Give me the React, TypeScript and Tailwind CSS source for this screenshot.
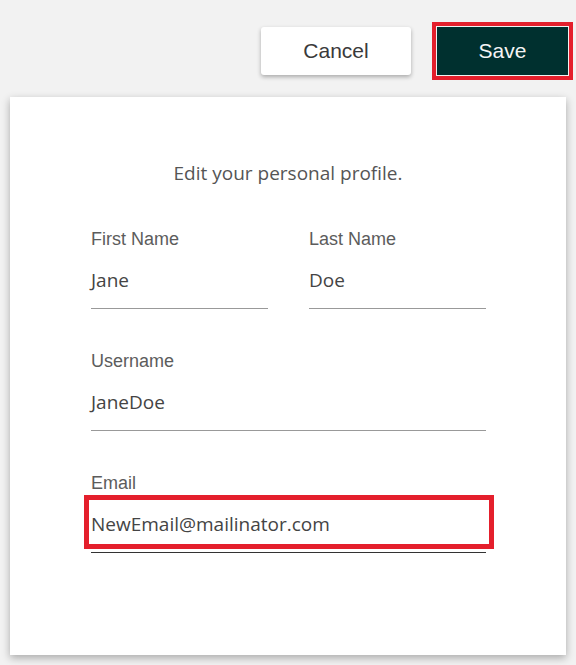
export default function App() {
  return (
    <div className="min-h-[665px] bg-[#f2f2f2] pt-[27px] font-['Liberation_Sans',Arial,sans-serif]">
      {/* Action buttons */}
      <div className="flex justify-end pr-[8px]">
        <button className="mr-[26px] h-[48px] w-[150px] rounded-[3px] bg-white text-[21px] text-[#3a3a3a] shadow-[0_2px_4px_rgba(0,0,0,0.3)]">
          Cancel
        </button>
        <button className="h-[48px] w-[131px] bg-[#00302f] text-[21px] text-[#f4f4f4] outline-[4px] outline-offset-1 outline-[#e41f2c] outline-solid">
          Save
        </button>
      </div>

      {/* Profile card */}
      <div className="mx-[10px] mt-[22px] h-[558px] bg-white px-[80px] pt-[64px] shadow-[0_3px_8px_rgba(0,0,0,0.3)]">
        <p className="text-center font-['Open_Sans',sans-serif] text-[19px] leading-[24px] text-[#555]">
          Edit your personal profile.
        </p>

        <div className="mt-[42px] ml-px grid grid-cols-2 gap-x-[41px]">
          <Field label="First Name" value="Jane" />
          <Field label="Last Name" value="Doe" />
        </div>
        <div className="mt-[40px] ml-px">
          <Field label="Username" value="JaneDoe" />
        </div>
        <div className="mt-[40px] ml-px">
          <Field label="Email" value="NewEmail@mailinator.com" focused />
        </div>
      </div>
    </div>
  );
}

interface FieldProps {
  label: string;
  value: string;
  focused?: boolean;
}

function Field({ label, value, focused }: FieldProps) {
  return (
    <div>
      <label className="block h-[24px] text-[18px] leading-[24px] text-[#5c5c5c]">{label}</label>
      <div className="relative mt-[9px] flex h-[40px] items-center font-['Open_Sans',sans-serif] text-[19px] text-[#444]">
        {value}
        {focused && (
          <span className="pointer-events-none absolute -top-[9px] -right-[8px] -bottom-[5px] -left-[7px] border-[5px] border-[#e41f2c]" />
        )}
      </div>
      <div className={`mt-[8px] border-t ${focused ? "border-[#333]" : "border-[#999]"}`} />
    </div>
  );
}
